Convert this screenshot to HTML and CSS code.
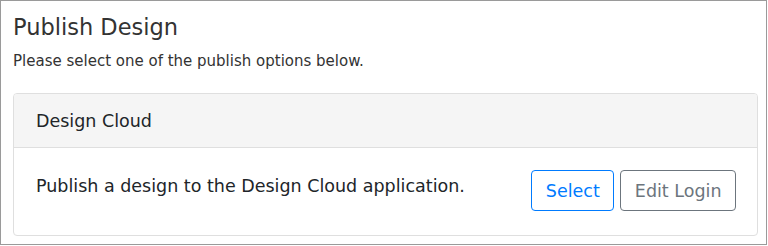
FILE: index.html
```html
<!DOCTYPE html>
<html>
<head>
<meta charset="utf-8">
<link rel="stylesheet" href="styles.css">
</head>
<body>
<div class="dialog">
  <h1 class="title">Publish Design</h1>
  <p class="subtitle">Please select one of the publish options below.</p>
  <div class="card">
    <div class="card-header">Design Cloud</div>
    <div class="card-body">
      <span class="card-text">Publish a design to the Design Cloud application.</span>
      <div class="actions">
        <button class="btn btn-primary">Select</button>
        <button class="btn btn-secondary">Edit Login</button>
      </div>
    </div>
  </div>
</div>
</body>
</html>
```
FILE: styles.css
```css
html, body {
  margin: 0;
  padding: 0;
  background: #fff;
}
body {
  font-family: "DejaVu Sans", sans-serif;
  color: #212529;
}
.dialog {
  box-sizing: border-box;
  width: 767px;
  height: 245px;
  border: 1px solid #9a9a9a;
  padding: 11px 8px 8px 12px;
  display: flex;
  flex-direction: column;
}
.title {
  margin: 0;
  font-size: 22.5px;
  font-weight: normal;
  line-height: 30px;
  color: #333;
}
.subtitle {
  margin: 9px 0 0;
  font-size: 15px;
  line-height: 20px;
  color: #333;
}
.card {
  margin-top: 22px;
  flex: 1;
  border: 1px solid #dfdfdf;
  border-radius: 4px;
  display: flex;
  flex-direction: column;
}
.card-header {
  background: #f5f5f5;
  border-bottom: 1px solid #dfdfdf;
  border-radius: 3px 3px 0 0;
  padding: 0 22px;
  height: 53px;
  display: flex;
  align-items: center;
  font-size: 17.5px;
}
.card-body {
  flex: 1;
  padding: 0 21px 0 22px;
  display: flex;
  align-items: center;
  justify-content: space-between;
}
.card-text {
  font-size: 17.5px;
  margin-top: -12px;
}
.actions {
  display: flex;
  gap: 6px;
  margin-top: -2px;
}
.btn {
  font-family: "DejaVu Sans", sans-serif;
  font-size: 17.5px;
  height: 41px;
  padding: 0 13.5px;
  background: #fff;
  border-radius: 4px;
  border: 1px solid;
  cursor: pointer;
}
.btn-primary {
  color: #007bff;
  border-color: #007bff;
}
.btn-secondary {
  color: #6c757d;
  border-color: #6c757d;
}
```
